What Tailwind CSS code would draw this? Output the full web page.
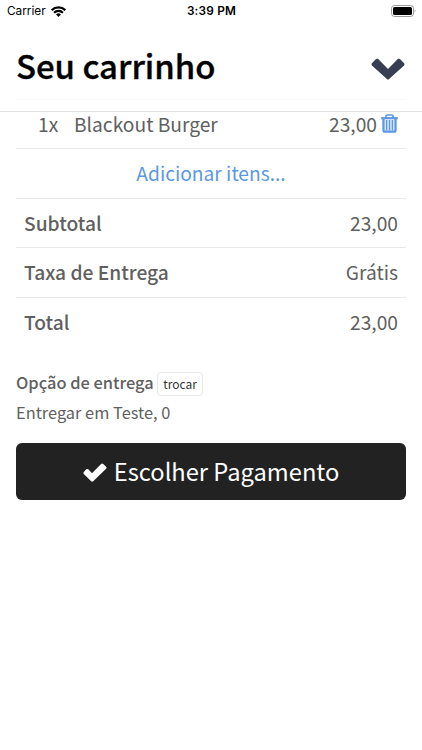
<!DOCTYPE html>
<html lang="pt-BR">
<head>
<meta charset="utf-8">
<meta name="viewport" content="width=device-width, initial-scale=1">
<title>Seu carrinho</title>
<script src="https://cdn.jsdelivr.net/npm/@tailwindcss/browser@4"></script>
</head>
<body class="h-[750px] overflow-hidden bg-white font-['Noto_Sans_CJK_JP','Noto_Sans_CJK_SC',sans-serif] text-[#606060]">
<div class="grid h-[22px] grid-cols-3 items-center pl-[7px] pr-[6px] font-[Inter,sans-serif] text-black">
  <div class="flex items-center gap-[5px]"><span class="pt-px text-[11.8px]">Carrier</span>
    <svg class="h-[11px] w-[15px]" viewBox="0 0 15 11" fill="none" stroke="#000"><path d="M.7 4.1a9.6 9.6 0 0 1 13.6 0" stroke-width="2.3"/><path d="M3.1 6.7a6.2 6.2 0 0 1 8.8 0" stroke-width="2.1"/><path d="M5.1 8.5a3.4 3.4 0 0 1 4.8 0L7.5 11Z" fill="#000" stroke="none"/></svg>
  </div>
  <div class="pt-px text-center text-[11.8px] font-semibold tracking-[0.2px]">3:39 PM</div>
  <svg class="h-[12px] w-[25px] justify-self-end" viewBox="0 0 25 12"><rect x=".5" y=".5" width="22" height="11" rx="3" fill="#fff" stroke="#999"/><rect x="2" y="2" width="19" height="8" rx="1.6"/><path d="M23.7 4.3q1.5 1.7 0 3.4z" fill="#999"/></svg>
</div>
<header class="h-[90px] border-b border-[#e3e3e3] px-4">
  <div class="flex h-[78px] justify-between border-b border-[#fafafa] pr-px">
    <h1 class="text-[32.9px] font-medium leading-[86px] text-black [-webkit-text-stroke:0.35px_#000]">Seu carrinho</h1>
    <svg class="mt-[36px] h-[22px] w-[34px] shrink-0" viewBox="0 0 34 22"><path d="M.9 5.3 5 1.1Q6.1.2 7.2 1.1L17 10.9 26.8 1.1Q27.9.2 29 1.1L33.1 5.3Q34 6.4 33.1 7.4L17.8 21.3Q17 22 16.2 21.3L.9 7.4Q0 6.4.9 5.3Z" fill="#383e54"/></svg>
  </div>
</header>
<main class="px-4">
  <section class="text-[19.2px] leading-[24px]">
    <div class="flex h-[37px] border-b border-[#e8e8e8] pl-[22px] pr-2">
      <span class="w-[36px]">1x</span><span>Blackout Burger</span>
      <span class="ml-auto">23,00</span>
      <svg class="ml-[4px] mt-[2px] h-[19px] w-[17px]" viewBox="0 0 17 19" fill="none" stroke="#5b98e3"><path d="M5 4V2.2Q5 1 6.2 1h4.6Q12 1 12 2.2V4" stroke-width="1.7"/><path d="M.2 4.2h16.6" stroke-width="2.2"/><path d="M2.5 5v11.2q0 1.4 1.4 1.4h9.2q1.4 0 1.4-1.4V5" stroke-width="2.3"/><path d="M5.6 6v10.5M8.5 6v10.5M11.4 6v10.5" stroke-width="1.7"/></svg>
    </div>
    <a class="block h-[50px] border-b border-[#e8e8e8] text-center leading-[48px] text-[#5b98e3]">Adicionar itens...</a>
    <div class="flex h-[49px] justify-between border-b border-[#e8e8e8] px-2 leading-[48px]"><span class="font-medium">Subtotal</span><span>23,00</span></div>
    <div class="flex h-[50px] justify-between border-b border-[#e8e8e8] px-2 leading-[48px]"><span class="font-medium">Taxa de Entrega</span><span>Grátis</span></div>
    <div class="flex h-[50px] justify-between px-2 leading-[48px]"><span class="font-medium">Total</span><span>23,00</span></div>
  </section>
  <section class="pt-[24px]">
    <div class="flex h-[24px] items-center"><span class="-mt-[4px] text-[16.4px] font-medium leading-[24px]">Opção de entrega</span><button class="ml-[3.5px] flex h-[24px] w-[46px] items-center justify-center rounded-[4px] border border-[#e8e8e8] text-[12px] text-[#333]">trocar</button></div>
    <p class="h-[47px] pt-[4px] text-[16.4px] leading-[24px]">Entregar em Teste, 0</p>
    <button class="flex h-[57px] w-full items-center justify-center rounded-[6px] bg-[#222] text-[23.7px] leading-[56px] text-white">
      <svg class="mr-[7px] mt-[2px] h-[19px] w-[24px]" viewBox="0 0 24 19"><path d="M.8 8.9 3.3 6.3Q4.3 5.5 5.3 6.3L9 10.2 18.1.9Q19.2.1 20.2.9l2.9 2.8Q24 4.7 23.1 5.7L10.2 18.3Q9.2 19.1 8.2 18.3L.8 11Q0 10 .8 8.9Z" fill="#fff"/></svg>
      <span class="-mt-px">Escolher Pagamento</span>
    </button>
  </section>
</main>
</body>
</html>
